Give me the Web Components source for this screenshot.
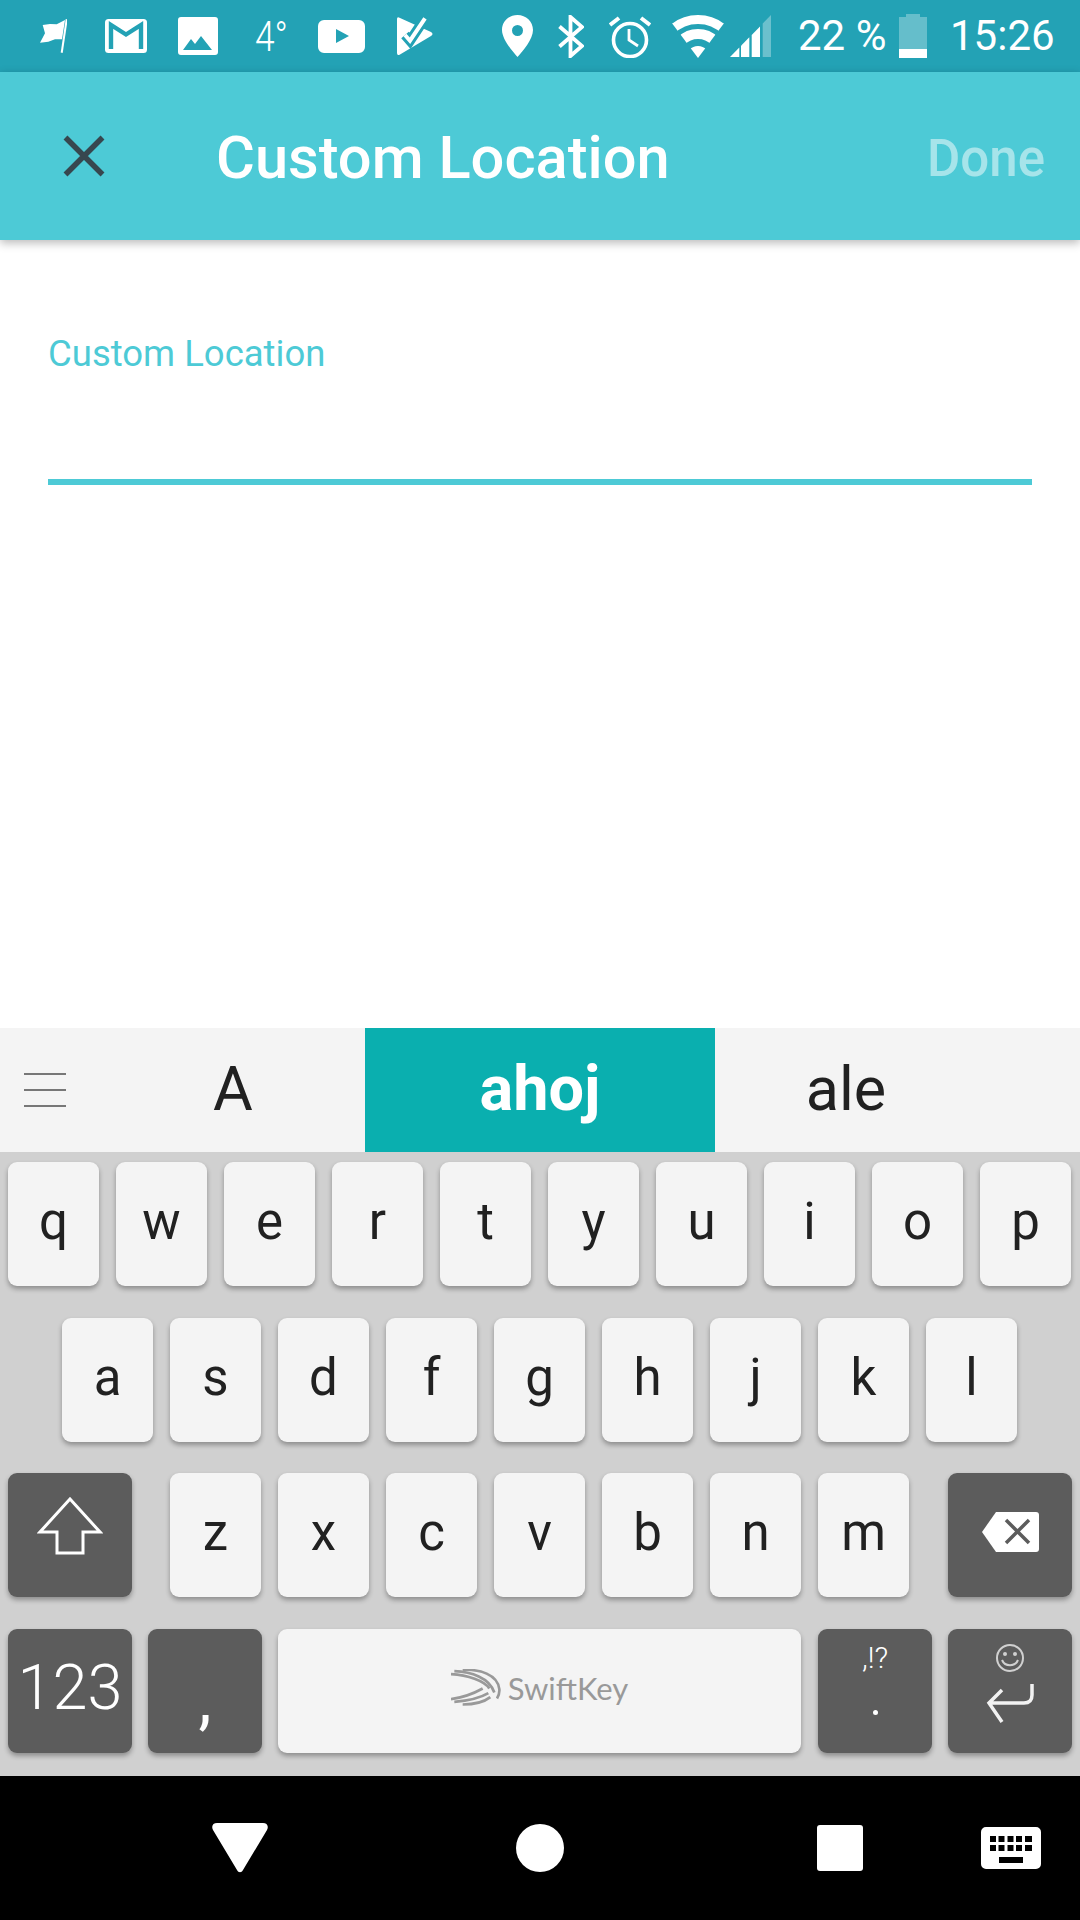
<!DOCTYPE html>
<html lang="en">
<head>
<meta charset="UTF-8">
<title>Custom Location</title>
<style>
    html, body { margin: 0; padding: 0; background: #fff; }
    body { width: 1080px; height: 1920px; display: flex; flex-direction: column; font-family: Roboto, sans-serif; overflow: hidden; }
    location-field { flex: 1; }
</style>
</head>
<body>
    <status-bar></status-bar>
    <app-bar title="Custom Location" action="Done"></app-bar>
    <location-field label="Custom Location"></location-field>
    <suggestion-bar></suggestion-bar>
    <key-board></key-board>
    <nav-bar></nav-bar>

    <script>
        class StatusBar extends HTMLElement {
            constructor() {
                super()
                let shadow = this.attachShadow({mode: 'open'})
                shadow.innerHTML = `
                <style>
                    :host { display: flex; align-items: center; height: 72px; background: #23a2b5; color: #fff; padding-left: 40px; box-sizing: border-box; flex: none; }
                    svg { display: block; flex: none; fill: #fff; }
                    .txt { font: 400 42px/74px Roboto, sans-serif; white-space: nowrap; flex: none; }
                    .temp { font: 300 43px/72px Roboto, sans-serif; transform: scaleX(.82); transform-origin: left center; }
                </style>
                <svg width="27" height="36" viewBox="0 0 27 36"><path d="M2.7 7 L10 6 L16.7 6.3 L25 2 L22 21.3 L15 21.3 L8.3 23.7 L0 24.7 L5 15.3 Z"/><path d="M25.7 1 L27.7 1.4 L22.7 35 L20.7 34.6 Z"/></svg>
                <svg style="margin-left:38px" width="42" height="34" viewBox="0 0 42 34"><rect width="42" height="34" rx="3.5"/><path d="M6 30 V6 L21 15.5 L36 6 V30" fill="none" stroke="#23a2b5" stroke-width="4.4"/></svg>
                <svg style="margin-left:31px" width="40" height="38" viewBox="0 0 40 38"><path fill-rule="evenodd" d="M3 0 H37 A3 3 0 0 1 40 3 V35 A3 3 0 0 1 37 38 H3 A3 3 0 0 1 0 35 V3 A3 3 0 0 1 3 0 Z M5 33 H34 L23 19 L17 27 L13 22 Z"/></svg>
                <span class="txt temp" style="margin-left:37px;width:28px">4°</span>
                <svg style="margin-left:35px" width="47" height="33" viewBox="0 0 47 33"><path fill-rule="evenodd" d="M6 0 H41 A6 6 0 0 1 47 6 V27 A6 6 0 0 1 41 33 H6 A6 6 0 0 1 0 27 V6 A6 6 0 0 1 6 0 Z M18 9 V23 L31 16 Z"/></svg>
                <svg style="margin-left:32px" width="36" height="38" viewBox="0 0 36 38"><path d="M0 2 Q0 -.5 2.500 .8 L34 15 Q37 17 34 19 L3 37.500 Q0 39 0 36 Z"/><path d="M8 18 L13 23.700 L28 1.300" fill="none" stroke="#23a2b5" stroke-width="10"/><path d="M8 18 L13 23.700 L28 1.300" fill="none" stroke="#fff" stroke-width="4"/></svg>
                <svg style="margin-left:69px" width="31" height="42" viewBox="0 0 31 42"><path fill-rule="evenodd" d="M15.5 0 C24 0 31 6.5 31 15 C31 24 21 36 15.5 42 C10 36 0 24 0 15 C0 6.5 7 0 15.5 0 Z M15.5 10 A5.5 5.5 0 1 0 15.5 21 A5.5 5.5 0 1 0 15.5 10 Z"/></svg>
                <svg style="margin-left:25px" width="26" height="43" viewBox="0 0 26 43"><path d="M1.500 11.500 L24 31 L12.500 41 V2 L24 12 L1.500 31.500" fill="none" stroke="#fff" stroke-width="3.800"/></svg>
                <svg style="margin-left:25px" width="42" height="43" viewBox="0 0 42 43"><circle cx="21" cy="25" r="16.500" fill="none" stroke="#fff" stroke-width="3.600"/><path d="M20 14 V25 L29 31" fill="none" stroke="#fff" stroke-width="2.800"/><path d="M1 10 L10 3 M41 10 L32 3" stroke="#fff" stroke-width="4"/></svg>
                <svg style="margin-left:21px" width="52" height="44" viewBox="0 0 52 44">
                    <defs><clipPath id="wedge"><path d="M26 44 L-1 8 V-4 H53 V8 Z"/></clipPath></defs>
                    <g clip-path="url(#wedge)" fill="none" stroke="#fff"><circle cx="26" cy="44" r="38.500" stroke-width="9"/><circle cx="26" cy="44" r="24" stroke-width="10"/><circle cx="26" cy="44" r="6" stroke-width="12"/></g>
                </svg>
                <svg style="margin-left:6px" width="43" height="42" viewBox="0 0 43 42"><path d="M0 42 L9.300 32.500 V42 Z"/><path d="M11 30.800 L19.300 22.300 V42 H11 Z"/><path d="M21.700 20 L30 11.400 V42 H21.700 Z"/><path d="M32.700 8.600 L41 0 V42 H32.700 Z" opacity=".33"/></svg>
                <span class="txt" style="margin-left:25px;width:89px">22 %</span>
                <svg style="margin-left:12px" width="28" height="44" viewBox="0 0 28 44"><path d="M7 0 H21 V3 H28 V35 H0 V3 H7 Z" opacity=".3"/><rect y="35" width="28" height="9"/></svg>
                <span class="txt" style="margin-left:23px">15:26</span>
            `
            }
        }

        class AppBar extends HTMLElement {
            constructor() {
                super()
                let shadow = this.attachShadow({mode: 'open'})
                shadow.innerHTML = `
                <style>
                    :host { display: flex; align-items: center; height: 168px; background: #4dcad6; box-sizing: border-box; flex: none; position: relative; z-index: 1; box-shadow: 0 3px 9px rgba(0,0,0,.28); font-family: Roboto, sans-serif; padding: 0 35px 0 63px; }
                    svg { display: block; flex: none; }
                    .title { color: #fff; font-size: 59.600px; font-weight: 500; margin-left: 111px; flex: 1; padding-top: 3px; }
                    .action { color: #a6e4ea; font-size: 51px; font-weight: 500; padding-top: 5px; }
                </style>
                <svg width="42" height="42" viewBox="0 0 42 42"><path d="M2.500 2.500 L39.500 39.500 M39.500 2.500 L2.500 39.500" stroke="#37474f" stroke-width="5.500" fill="none"/></svg>
                <span class="title"></span>
                <span class="action"></span>
            `
                shadow.querySelector('.title').textContent = this.getAttribute('title')
                shadow.querySelector('.action').textContent = this.getAttribute('action')
            }
        }

        class LocationField extends HTMLElement {
            constructor() {
                super()
                let shadow = this.attachShadow({mode: 'open'})
                shadow.innerHTML = `
                <style>
                    :host { display: block; background: #fff; padding: 91px 48px 0; box-sizing: border-box; font-family: Roboto, sans-serif; }
                    .label { color: #4dcad6; font-size: 36.500px; line-height: 46px; }
                    .line { height: 6px; background: #4dcad6; margin-top: 102px; }
                </style>
                <div class="label"></div>
                <div class="line"></div>
            `
                shadow.querySelector('.label').textContent = this.getAttribute('label')
            }
        }

        class SuggestionBar extends HTMLElement {
            constructor() {
                super()
                let shadow = this.attachShadow({mode: 'open'})
                shadow.innerHTML = `
                <style>
                    :host { display: flex; height: 124px; background: #f4f4f4; flex: none; font-family: Roboto, sans-serif; color: #212121; font-size: 61px; }
                    .menu { width: 101px; padding-left: 24px; box-sizing: border-box; display: flex; flex-direction: column; justify-content: center; gap: 14px; flex: none; }
                    .menu i { display: block; width: 42px; height: 2px; background: #777; }
                    .cell { display: flex; align-items: center; justify-content: center; padding-bottom: 3px; box-sizing: border-box; }
                    .a { width: 264px; }
                    .sel { width: 350px; background: #0aafaf; color: #fff; font-weight: 700; font-size: 63px; }
                    .c { width: 262px; }
                </style>
                <div class="menu"><i></i><i></i><i></i></div>
                <div class="cell a">A</div>
                <div class="cell sel">ahoj</div>
                <div class="cell c">ale</div>
            `
            }
        }

        class KbKey extends HTMLElement {
            constructor() {
                super()
                let shadow = this.attachShadow({mode: 'open'})
                shadow.innerHTML = `
                <style>
                    :host { display: flex; align-items: center; justify-content: center; width: 91px; height: 124px; flex: none; box-sizing: border-box; border-radius: 9px; background: #f4f4f4; color: #212121; box-shadow: 0 3px 5px rgba(0,0,0,.32); font: 400 51px Roboto, sans-serif; position: relative; padding-bottom: 5px; }
                    :host([dark]) { background: #5c5c5c; color: #fff; }
                </style>
                <slot></slot>
            `
            }
        }

        class KeyBoard extends HTMLElement {
            constructor() {
                super()
                let shadow = this.attachShadow({mode: 'open'})
                const row = (s) => s.split('').map(c => `<kb-key>${c}</kb-key>`).join('')
                shadow.innerHTML = `
                <style>
                    :host { display: flex; flex-direction: column; gap: 31.500px; height: 624px; box-sizing: border-box; padding-top: 10px; background: #d0d0d0; flex: none; }
                    .row { display: flex; gap: 17px; padding-left: 8px; }
                    svg { display: block; }
                    kb-key.wide { width: 124px; }
                    kb-key.mid { width: 114px; }
                </style>
                <div class="row">${row('qwertyuiop')}</div>
                <div class="row" style="padding-left:62px">${row('asdfghjkl')}</div>
                <div class="row">
                    <kb-key dark class="wide" style="margin-right:21px;align-items:flex-start;padding-top:24px">
                        <svg width="66" height="58" viewBox="0 0 66 58"><path d="M33 2 L63 35 H46 V56 H20 V35 H3 Z" fill="none" stroke="#fff" stroke-width="3"/></svg>
                    </kb-key>
                    ${row('zxcvbnm')}
                    <kb-key dark class="wide" style="margin-left:22px;align-items:flex-start;padding-top:39px">
                        <svg width="57" height="40" viewBox="0 0 57 40"><path d="M14 0 H54 A3 3 0 0 1 57 3 V37 A3 3 0 0 1 54 40 H14 L0 20 Z" fill="#fff"/><path d="M24 8 L47 31 M47 8 L24 31" stroke="#5c5c5c" stroke-width="3.500"/></svg>
                    </kb-key>
                </div>
                <div class="row" style="gap:16px">
                    <kb-key dark class="wide" style="font-size:63px;font-weight:300;padding-bottom:6px">123</kb-key>
                    <kb-key dark class="mid" style="font-size:66px;padding-bottom:0;padding-top:18px;font-weight:400">,</kb-key>
                    <kb-key style="width:523px;padding-bottom:6px"><sk-logo></sk-logo></kb-key>
                    <kb-key dark class="mid" style="margin-left:1px;flex-direction:column;justify-content:flex-start;font-size:30px;padding-top:13px;line-height:32px">
                        <span style="font-weight:300">,!?</span>
                        <span style="display:block;width:5px;height:5px;border-radius:50%;background:#fff;margin-top:36px"></span>
                    </kb-key>
                    <kb-key dark class="wide" style="align-items:flex-start;padding-top:15px">
                        <svg width="50" height="80" viewBox="0 0 50 80"><g fill="none" stroke="#d0d0d0" stroke-width="2"><circle cx="25" cy="14" r="13"/><path d="M17 16 C20 23 30 23 33 16"/></g><circle cx="20" cy="10" r="2" fill="#d0d0d0"/><circle cx="30" cy="10" r="2" fill="#d0d0d0"/><path d="M47 41 V52 C47 58 44 60 39 60 H5 M17 47 L4 60 L17 79" transform="translate(0,-1)" fill="none" stroke="#f2f2f2" stroke-width="3.500"/></svg>
                    </kb-key>
                </div>
            `
            }
        }

        class SkLogo extends HTMLElement {
            constructor() {
                super()
                let shadow = this.attachShadow({mode: 'open'})
                shadow.innerHTML = `
                <style>
                    :host { display: flex; align-items: center; gap: 7px; color: #999; font: 400 31px Lato, sans-serif; }
                    svg { display: block; }
                </style>
                <svg width="50" height="37" viewBox="0 0 150 110" fill="none" stroke="#999" stroke-width="8"><path d="M0 15 C50 18 100 35 115 58"/><path d="M10 6 C60 8 115 25 130 70"/><path d="M35 2 C85 0 140 15 145 60 C146 70 143 80 138 88"/><path d="M0 90 C35 85 70 72 95 58"/><path d="M10 98 C50 95 90 85 112 72"/><path d="M35 106 C70 106 100 98 118 84"/></svg>
                <span>SwiftKey</span>
            `
            }
        }

        class NavBar extends HTMLElement {
            constructor() {
                super()
                let shadow = this.attachShadow({mode: 'open'})
                shadow.innerHTML = `
                <style>
                    :host { display: flex; align-items: center; height: 144px; background: #000; flex: none; padding-left: 212px; box-sizing: border-box; }
                    svg { display: block; flex: none; fill: #fff; }
                </style>
                <svg width="56" height="50" viewBox="0 0 56 50"><path d="M5 0 H51 C55 0 57 3 55 7 L31 47 C29.500 50 26.500 50 25 47 L1 7 C-1 3 1 0 5 0 Z"/></svg>
                <svg style="margin-left:248px" width="48" height="48" viewBox="0 0 48 48"><circle cx="24" cy="24" r="24"/></svg>
                <svg style="margin-left:253px" width="46" height="46" viewBox="0 0 46 46"><rect width="46" height="46" rx="3"/></svg>
                <svg style="margin-left:118px" width="60" height="42" viewBox="0 0 60 42"><path fill-rule="evenodd" d="M5 0 H55 A5 5 0 0 1 60 5 V37 A5 5 0 0 1 55 42 H5 A5 5 0 0 1 0 37 V5 A5 5 0 0 1 5 0 Z M9 9 V15 H15 V9 Z M17.500 9 V15 H23.500 V9 Z M26.500 9 V15 H32.500 V9 Z M35 9 V15 H41 V9 Z M44 9 V15 H51 V9 Z M9 18 V24 H15 V18 Z M17.500 18 V24 H23.500 V18 Z M26.500 18 V24 H32.500 V18 Z M35 18 V24 H41 V18 Z M44 18 V24 H51 V18 Z M18 30 V36 H42 V30 Z"/></svg>
            `
            }
        }

        window.customElements.define('status-bar', StatusBar)
        window.customElements.define('app-bar', AppBar)
        window.customElements.define('location-field', LocationField)
        window.customElements.define('suggestion-bar', SuggestionBar)
        window.customElements.define('kb-key', KbKey)
        window.customElements.define('sk-logo', SkLogo)
        window.customElements.define('key-board', KeyBoard)
        window.customElements.define('nav-bar', NavBar)
    </script>
</body>
</html>
